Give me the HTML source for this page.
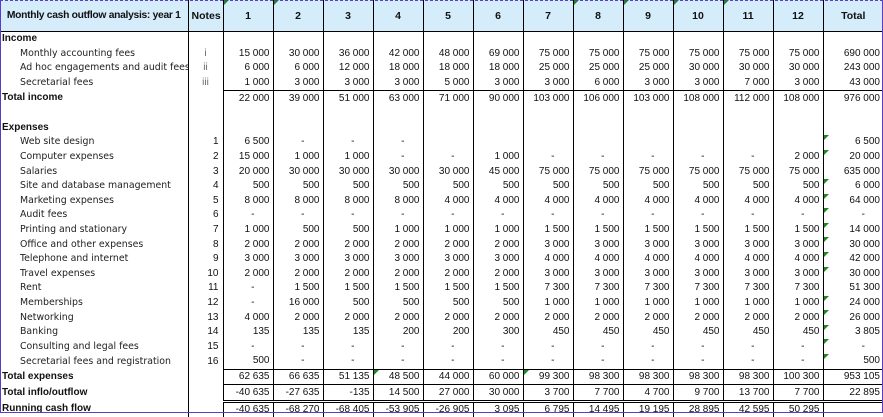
<!DOCTYPE html>
<html><head><meta charset="utf-8"><style>
html,body{margin:0;padding:0;background:#fff}
body{width:883px;height:413px;overflow:hidden;position:relative}
.frame{position:absolute;left:0;top:0;width:881px;height:411px;border:1px solid #5b3cc8;border-top:1px dashed #5b3cc8;}
table{position:absolute;left:0;top:0;border-collapse:collapse;table-layout:fixed;width:883px;font-family:"Liberation Sans",sans-serif;font-size:10px;color:#111}
td{height:14.6px;padding:0 3px;white-space:nowrap;overflow:hidden;text-align:right;border-right:1px solid #000;line-height:12px;position:relative}
td.l{text-align:left;border-right:1px solid #000;padding-left:2px}
td.s{font-family:"DejaVu Sans",sans-serif;font-size:9.4px;padding-left:20px;color:#222}
td.b{font-weight:bold}
td.n{text-align:right;padding-right:4px;font-size:10px}
td.c{text-align:center;color:#666}
td.d{padding-right:18px}
tr.h td{height:31px;background:#d5ecfb;font-weight:bold;text-align:center;border-bottom:1px solid #000;font-size:10.5px}
tr.h td.l{text-align:center;font-size:10.3px;letter-spacing:-0.3px;padding:0}
tr.t td.v{border-top:1px solid #000}
tr.dd td.v{border-top:3px double #000}
td.last{border-right:none}
.g{position:absolute;left:0;top:0;width:0;height:0;border-top:5px solid #1e8a1e;border-right:5px solid transparent}
</style></head><body>
<table>
<colgroup><col style="width:188px"><col style="width:35px"><col span="12" style="width:50px"><col style="width:60px"></colgroup>
<tr class="h"><td class="l">Monthly cash outflow analysis: year 1</td><td>Notes</td><td><span class="g"></span>1</td><td><span class="g"></span>2</td><td>3</td><td>4</td><td>5</td><td>6</td><td>7</td><td><span class="g"></span>8</td><td><span class="g"></span>9</td><td><span class="g"></span>10</td><td><span class="g"></span>11</td><td>12</td><td class="last">Total</td></tr>
<tr><td class="l b">Income</td><td></td><td></td><td></td><td></td><td></td><td></td><td></td><td></td><td></td><td></td><td></td><td></td><td></td><td class="last"></td></tr>
<tr><td class="l s">Monthly accounting fees</td><td class="c">i</td><td>15 000</td><td>30 000</td><td>36 000</td><td>42 000</td><td>48 000</td><td>69 000</td><td>75 000</td><td>75 000</td><td>75 000</td><td>75 000</td><td>75 000</td><td>75 000</td><td class="last">690 000</td></tr>
<tr><td class="l s">Ad hoc engagements and audit fees</td><td class="c">ii</td><td>6 000</td><td>6 000</td><td>12 000</td><td>18 000</td><td>18 000</td><td>18 000</td><td>25 000</td><td>25 000</td><td>25 000</td><td>30 000</td><td>30 000</td><td>30 000</td><td class="last">243 000</td></tr>
<tr><td class="l s">Secretarial fees</td><td class="c">iii</td><td>1 000</td><td>3 000</td><td>3 000</td><td>3 000</td><td>5 000</td><td>3 000</td><td>3 000</td><td>6 000</td><td>3 000</td><td>3 000</td><td>7 000</td><td>3 000</td><td class="last">43 000</td></tr>
<tr class="t"><td class="l b">Total income</td><td></td><td class="v">22 000</td><td class="v">39 000</td><td class="v">51 000</td><td class="v">63 000</td><td class="v">71 000</td><td class="v">90 000</td><td class="v">103 000</td><td class="v">106 000</td><td class="v">103 000</td><td class="v">108 000</td><td class="v">112 000</td><td class="v">108 000</td><td class="v last">976 000</td></tr>
<tr><td class="l"></td><td></td><td></td><td></td><td></td><td></td><td></td><td></td><td></td><td></td><td></td><td></td><td></td><td></td><td class="last"></td></tr>
<tr><td class="l b">Expenses</td><td></td><td></td><td></td><td></td><td></td><td></td><td></td><td></td><td></td><td></td><td></td><td></td><td></td><td class="last"></td></tr>
<tr><td class="l s">Web site design</td><td class="n">1</td><td>6 500</td><td class="d">-</td><td class="d">-</td><td class="d">-</td><td></td><td></td><td></td><td></td><td></td><td></td><td></td><td></td><td class="last"><span class="g"></span>6 500</td></tr>
<tr><td class="l s">Computer expenses</td><td class="n">2</td><td>15 000</td><td>1 000</td><td>1 000</td><td class="d">-</td><td class="d">-</td><td>1 000</td><td class="d">-</td><td class="d">-</td><td class="d">-</td><td class="d">-</td><td class="d">-</td><td>2 000</td><td class="last"><span class="g"></span>20 000</td></tr>
<tr><td class="l s">Salaries</td><td class="n">3</td><td>20 000</td><td>30 000</td><td>30 000</td><td>30 000</td><td>30 000</td><td>45 000</td><td>75 000</td><td>75 000</td><td>75 000</td><td>75 000</td><td>75 000</td><td>75 000</td><td class="last">635 000</td></tr>
<tr><td class="l s">Site and database management</td><td class="n">4</td><td>500</td><td>500</td><td>500</td><td>500</td><td>500</td><td>500</td><td>500</td><td>500</td><td>500</td><td>500</td><td>500</td><td>500</td><td class="last"><span class="g"></span>6 000</td></tr>
<tr><td class="l s">Marketing expenses</td><td class="n">5</td><td>8 000</td><td>8 000</td><td>8 000</td><td>8 000</td><td>4 000</td><td>4 000</td><td>4 000</td><td>4 000</td><td>4 000</td><td>4 000</td><td>4 000</td><td>4 000</td><td class="last"><span class="g"></span>64 000</td></tr>
<tr><td class="l s">Audit fees</td><td class="n">6</td><td class="d">-</td><td class="d">-</td><td class="d">-</td><td class="d">-</td><td class="d">-</td><td class="d">-</td><td class="d">-</td><td class="d">-</td><td class="d">-</td><td class="d">-</td><td class="d">-</td><td class="d">-</td><td class="d last"><span class="g"></span>-</td></tr>
<tr><td class="l s">Printing and stationary</td><td class="n">7</td><td>1 000</td><td>500</td><td>500</td><td>1 000</td><td>1 000</td><td>1 000</td><td>1 500</td><td>1 500</td><td>1 500</td><td>1 500</td><td>1 500</td><td>1 500</td><td class="last"><span class="g"></span>14 000</td></tr>
<tr><td class="l s">Office and other expenses</td><td class="n">8</td><td>2 000</td><td>2 000</td><td>2 000</td><td>2 000</td><td>2 000</td><td>2 000</td><td>3 000</td><td>3 000</td><td>3 000</td><td>3 000</td><td>3 000</td><td>3 000</td><td class="last"><span class="g"></span>30 000</td></tr>
<tr><td class="l s">Telephone and internet</td><td class="n">9</td><td>3 000</td><td>3 000</td><td>3 000</td><td>3 000</td><td>3 000</td><td>3 000</td><td>4 000</td><td>4 000</td><td>4 000</td><td>4 000</td><td>4 000</td><td>4 000</td><td class="last"><span class="g"></span>42 000</td></tr>
<tr><td class="l s">Travel expenses</td><td class="n">10</td><td>2 000</td><td>2 000</td><td>2 000</td><td>2 000</td><td>2 000</td><td>2 000</td><td>3 000</td><td>3 000</td><td>3 000</td><td>3 000</td><td>3 000</td><td>3 000</td><td class="last"><span class="g"></span>30 000</td></tr>
<tr><td class="l s">Rent</td><td class="n">11</td><td class="d">-</td><td>1 500</td><td>1 500</td><td>1 500</td><td>1 500</td><td>1 500</td><td>7 300</td><td>7 300</td><td>7 300</td><td>7 300</td><td>7 300</td><td>7 300</td><td class="last">51 300</td></tr>
<tr><td class="l s">Memberships</td><td class="n">12</td><td class="d">-</td><td>16 000</td><td>500</td><td>500</td><td>500</td><td>500</td><td>1 000</td><td>1 000</td><td>1 000</td><td>1 000</td><td>1 000</td><td>1 000</td><td class="last"><span class="g"></span>24 000</td></tr>
<tr><td class="l s">Networking</td><td class="n">13</td><td>4 000</td><td>2 000</td><td>2 000</td><td>2 000</td><td>2 000</td><td>2 000</td><td>2 000</td><td>2 000</td><td>2 000</td><td>2 000</td><td>2 000</td><td>2 000</td><td class="last"><span class="g"></span>26 000</td></tr>
<tr><td class="l s">Banking</td><td class="n">14</td><td>135</td><td>135</td><td>135</td><td>200</td><td>200</td><td>300</td><td>450</td><td>450</td><td>450</td><td>450</td><td>450</td><td>450</td><td class="last"><span class="g"></span>3 805</td></tr>
<tr><td class="l s">Consulting and legal fees</td><td class="n">15</td><td class="d">-</td><td class="d">-</td><td class="d">-</td><td class="d">-</td><td class="d">-</td><td class="d">-</td><td class="d">-</td><td class="d">-</td><td class="d">-</td><td class="d">-</td><td class="d">-</td><td class="d">-</td><td class="d last"><span class="g"></span>-</td></tr>
<tr><td class="l s">Secretarial fees and registration</td><td class="n">16</td><td>500</td><td class="d">-</td><td class="d">-</td><td class="d">-</td><td class="d">-</td><td class="d">-</td><td class="d">-</td><td class="d">-</td><td class="d">-</td><td class="d">-</td><td class="d">-</td><td class="d">-</td><td class="last"><span class="g"></span>500</td></tr>
<tr class="t"><td class="l b">Total expenses</td><td></td><td class="v">62 635</td><td class="v">66 635</td><td class="v">51 135</td><td class="v"><span class="g"></span>48 500</td><td class="v">44 000</td><td class="v">60 000</td><td class="v"><span class="g"></span>99 300</td><td class="v">98 300</td><td class="v">98 300</td><td class="v">98 300</td><td class="v">98 300</td><td class="v">100 300</td><td class="v last">953 105</td></tr>
<tr class="t"><td class="l b">Total inflo/outflow</td><td></td><td class="v">-40 635</td><td class="v">-27 635</td><td class="v">-135</td><td class="v">14 500</td><td class="v">27 000</td><td class="v">30 000</td><td class="v">3 700</td><td class="v">7 700</td><td class="v">4 700</td><td class="v">9 700</td><td class="v">13 700</td><td class="v">7 700</td><td class="v last">22 895</td></tr>
<tr class="dd"><td class="l b">Running cash flow</td><td></td><td class="v">-40 635</td><td class="v">-68 270</td><td class="v">-68 405</td><td class="v">-53 905</td><td class="v">-26 905</td><td class="v">3 095</td><td class="v">6 795</td><td class="v">14 495</td><td class="v">19 195</td><td class="v">28 895</td><td class="v">42 595</td><td class="v">50 295</td><td class="v last"></td></tr>
</table>
<div class="frame"></div>
</body></html>
